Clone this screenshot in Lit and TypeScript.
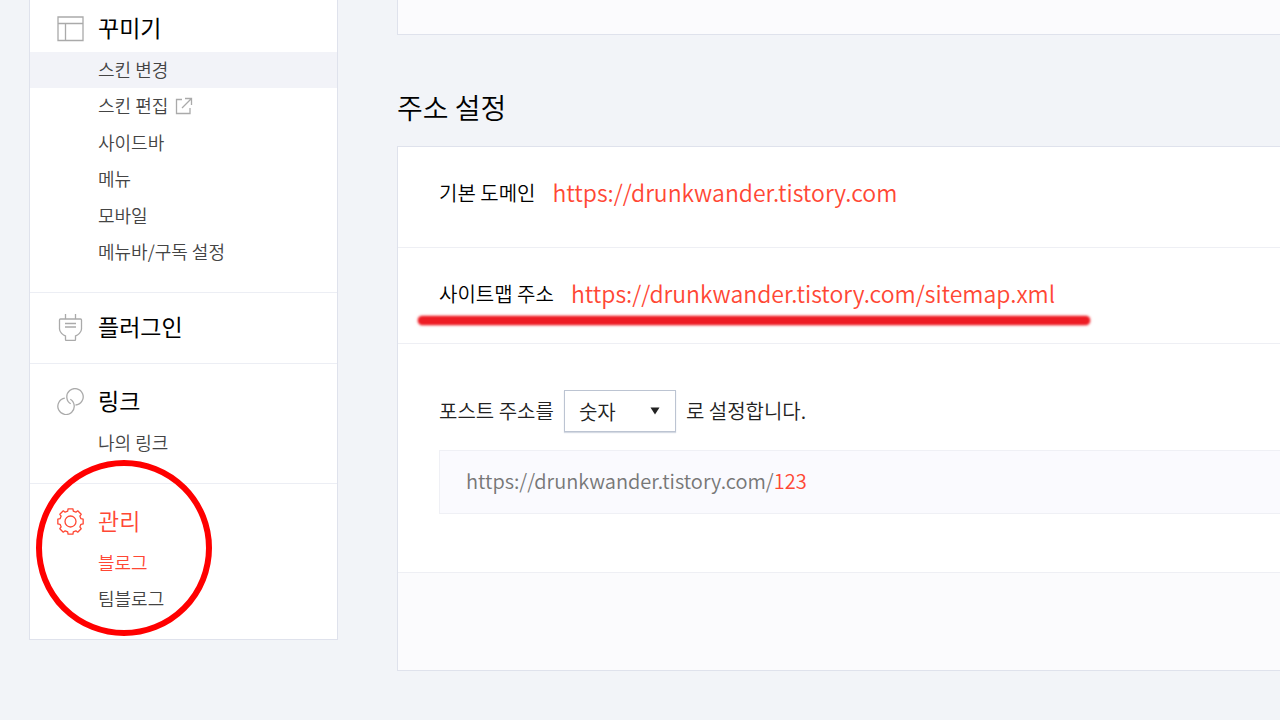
import { LitElement, html, css, svg, nothing } from "lit";
import { customElement } from "lit/decorators.js";
import { classMap } from "lit/directives/class-map.js";

const toothed = (() => {
  const points: string[] = [];
  const teeth = 8;
  for (let i = 0; i < teeth; i++) {
    const mid = (i * 360) / teeth - 90;
    const spots: [number, number][] = [
      [-15, 10.8],
      [-11, 12.9],
      [11, 12.9],
      [15, 10.8],
    ];
    for (const [delta, radius] of spots) {
      const a = ((mid + delta) * Math.PI) / 180;
      points.push(`${(13.5 + radius * Math.cos(a)).toFixed(2)} ${(13.5 + radius * Math.sin(a)).toFixed(2)}`);
    }
  }
  return `M${points.join("L")}Z`;
})();

const icons = {
  layout: svg`<path d="M1 2H26V25.500H1ZM1 8.500H26M8.500 8.500V25.500"/>`,
  plug: svg`<path d="M8.500 0V5M18.500 0V5M3.500 5H23.500Q24.500 5 24.500 6V15C24.500 18 21 21.500 18.500 22V25.500Q18.500 26.500 17.500 26.500H9.500Q8.500 26.500 8.500 25.500V22C6 21.500 2.500 18 2.500 15V6Q2.500 5 3.500 5ZM8 9.500H19M8 13H19"/>`,
  link: svg`<path d="M7.800 10.200A8.200 8.200 0 1 0 13.300 11.300"/><path d="M18.500 17A8.200 8.200 0 1 0 13.700 15.800"/>`,
  gear: svg`<path d=${toothed} stroke-linejoin="round"/><circle cx="13.500" cy="13.500" r="5.500"/>`,
};

interface Item { label: string; highlighted?: boolean; current?: boolean; external?: boolean }
interface Group { icon: keyof typeof icons; label: string; current?: boolean; items: Item[] }

const menu: Group[] = [
  {
    icon: "layout",
    label: "꾸미기",
    items: [
      { label: "스킨 변경", highlighted: true },
      { label: "스킨 편집", external: true },
      { label: "사이드바" },
      { label: "메뉴" },
      { label: "모바일" },
      { label: "메뉴바/구독 설정" },
    ],
  },
  { icon: "plug", label: "플러그인", items: [] },
  { icon: "link", label: "링크", items: [{ label: "나의 링크" }] },
  {
    icon: "gear",
    label: "관리",
    current: true,
    items: [{ label: "블로그", current: true }, { label: "팀블로그" }],
  },
];

@customElement("side-menu")
export class SideMenu extends LitElement {
  static styles = css`
    :host { display: block; position: relative; background: #fff; border: 1px solid #dfe2ec; border-top: 0; }
    * { box-sizing: border-box; }
    a { color: inherit; text-decoration: none; }
    ul { list-style: none; margin: 0; padding: 0; }
    section { padding: 15px 0 22px; }
    section + section { border-top: 1px solid #eceef4; }
    section:first-child { padding-top: 6px; }
    section.single { padding: 12px 0; }
    h2 { margin: 0; padding: 0 0 2px 27px; height: 46px; display: flex; align-items: center; gap: 14px; font-size: 23px; font-weight: 400; line-height: 40px; color: #000; }
    h2 a { padding-bottom: 2px; }
    .icon { flex: none; width: 27px; height: 27px; fill: none; stroke: #aaa; stroke-width: 1.3; }
    h2.current { color: #ff4734; font-weight: 350; }
    .current .icon { stroke: #ff4734; }
    ul { display: grid; align-content: space-between; }
    section:first-child ul { min-height: 218px; }
    li { display: flex; align-items: center; gap: 7px; height: 36px; padding-left: 68px; font-size: 18px; line-height: 32px; color: #444; }
    li a { padding-bottom: 2px; }
    li.highlighted { background: #f2f3f8; }
    li.current { color: #ff4734; }
    .external { width: 18px; height: 18px; fill: none; stroke: #aaa; stroke-width: 1.3; }
    .mark { position: absolute; left: 6px; bottom: 3px; width: 176px; height: 176px; border: 6px solid #f00; border-radius: 50%; pointer-events: none; }
  `;

  render() {
    return html`<nav>
        ${menu.map(
          (group) => html`<section class=${classMap({ single: group.items.length === 0 })}>
            <h2 class=${classMap({ current: !!group.current })}>
              <svg class="icon" viewBox="0 0 27 27" aria-hidden="true">${icons[group.icon]}</svg>
              <a href="#">${group.label}</a>
            </h2>
            ${group.items.length
              ? html`<ul>
                  ${group.items.map(
                    (item) => html`<li class=${classMap({ highlighted: !!item.highlighted, current: !!item.current })}>
                      <a href="#">${item.label}</a>
                      ${item.external
                        ? html`<svg class="external" viewBox="0 0 18 18" aria-hidden="true"><path d="M7 2.500H1.500V16.500H15V11M10 1.500H16.500V8M16.500 1.500L7 11" /></svg>`
                        : nothing}
                    </li>`,
                  )}
                </ul>`
              : nothing}
          </section>`,
        )}
      </nav>
      <div class="mark"></div>`;
  }
}

@customElement("app-root")
export class AppRoot extends LitElement {
  static styles = css`
    :host { display: block; min-height: 100vh; overflow: hidden; background: #f2f4f8; color: #000; font-family: "Noto Sans CJK KR", sans-serif; font-weight: 350; }
    * { box-sizing: border-box; }
    a { color: #ff4734; text-decoration: none; }
    .page { display: grid; grid-template-columns: 309px 1fr; gap: 59px; align-items: start; padding: 0 0 49px 29px; }
    .previous { height: 35px; background: #fbfbfd; border: 1px solid #dfe2ec; border-width: 0 0 1px 1px; }
    h1 { margin: 0; padding: 52px 0 19px; font-size: 28px; font-weight: 350; line-height: 40px; }
    .panel { background: #fff; border: 1px solid #dfe2ec; border-right: 0; }
    .row { position: relative; display: flex; align-items: center; gap: 17px; padding: 27px 41px 30px; border-bottom: 1px solid #eeeff4; font-size: 20px; line-height: 36px; }
    .row:first-child { padding-bottom: 35px; }
    .row a { padding-bottom: 2px; font-size: 23px; }
    .underline { position: absolute; left: 20px; top: 68px; width: 672px; height: 9px; border-radius: 5px; background: #ee1c24; filter: blur(1px); box-shadow: 0 0 2px #ee1c24; }
    .post { padding: 46px 0 58px 41px; border-bottom: 1px solid #eeeff4; }
    .format { display: flex; align-items: center; gap: 10px; font-size: 20px; color: #222; }
    .format label, .format span { padding-bottom: 2px; }
    .select { position: relative; }
    select { display: block; appearance: none; width: 112px; height: 42px; margin: 0; padding: 0 14px; border: 1px solid #bcc4d2; border-radius: 0; background: #fff; box-shadow: 0 1px 1px #d5dae3; font: inherit; color: #222; }
    .arrow { position: absolute; right: 16px; top: 17px; width: 10px; height: 8px; fill: #222; pointer-events: none; }
    .preview { margin: 18px 0 0; padding: 12px 26px 14px; border: 1px solid #eff0f5; border-right: 0; background: #fafafe; font-size: 20px; line-height: 36px; color: #777; }
    .preview em { font-style: normal; color: #ff4734; }
    .footer { height: 97px; background: #fbfbfd; }
  `;

  render() {
    return html`<div class="page">
      <side-menu></side-menu>
      <main>
        <div class="previous"></div>
        <h1>주소 설정</h1>
        <div class="panel">
          <div class="row">
            <span>기본 도메인</span>
            <a href="https://drunkwander.tistory.com">https://drunkwander.tistory.com</a>
          </div>
          <div class="row">
            <span>사이트맵 주소</span>
            <a href="https://drunkwander.tistory.com/sitemap.xml">https://drunkwander.tistory.com/sitemap.xml</a>
            <div class="underline"></div>
          </div>
          <div class="post">
            <div class="format">
              <label for="format">포스트 주소를</label>
              <div class="select">
                <select id="format"><option>숫자</option></select>
                <svg class="arrow" viewBox="0 0 10 8" aria-hidden="true"><path d="M0.500 0.500H9.500L5 7.500Z" /></svg>
              </div>
              <span>로 설정합니다.</span>
            </div>
            <p class="preview">https://drunkwander.tistory.com/<em>123</em></p>
          </div>
          <div class="footer"></div>
        </div>
      </main>
    </div>`;
  }
}
